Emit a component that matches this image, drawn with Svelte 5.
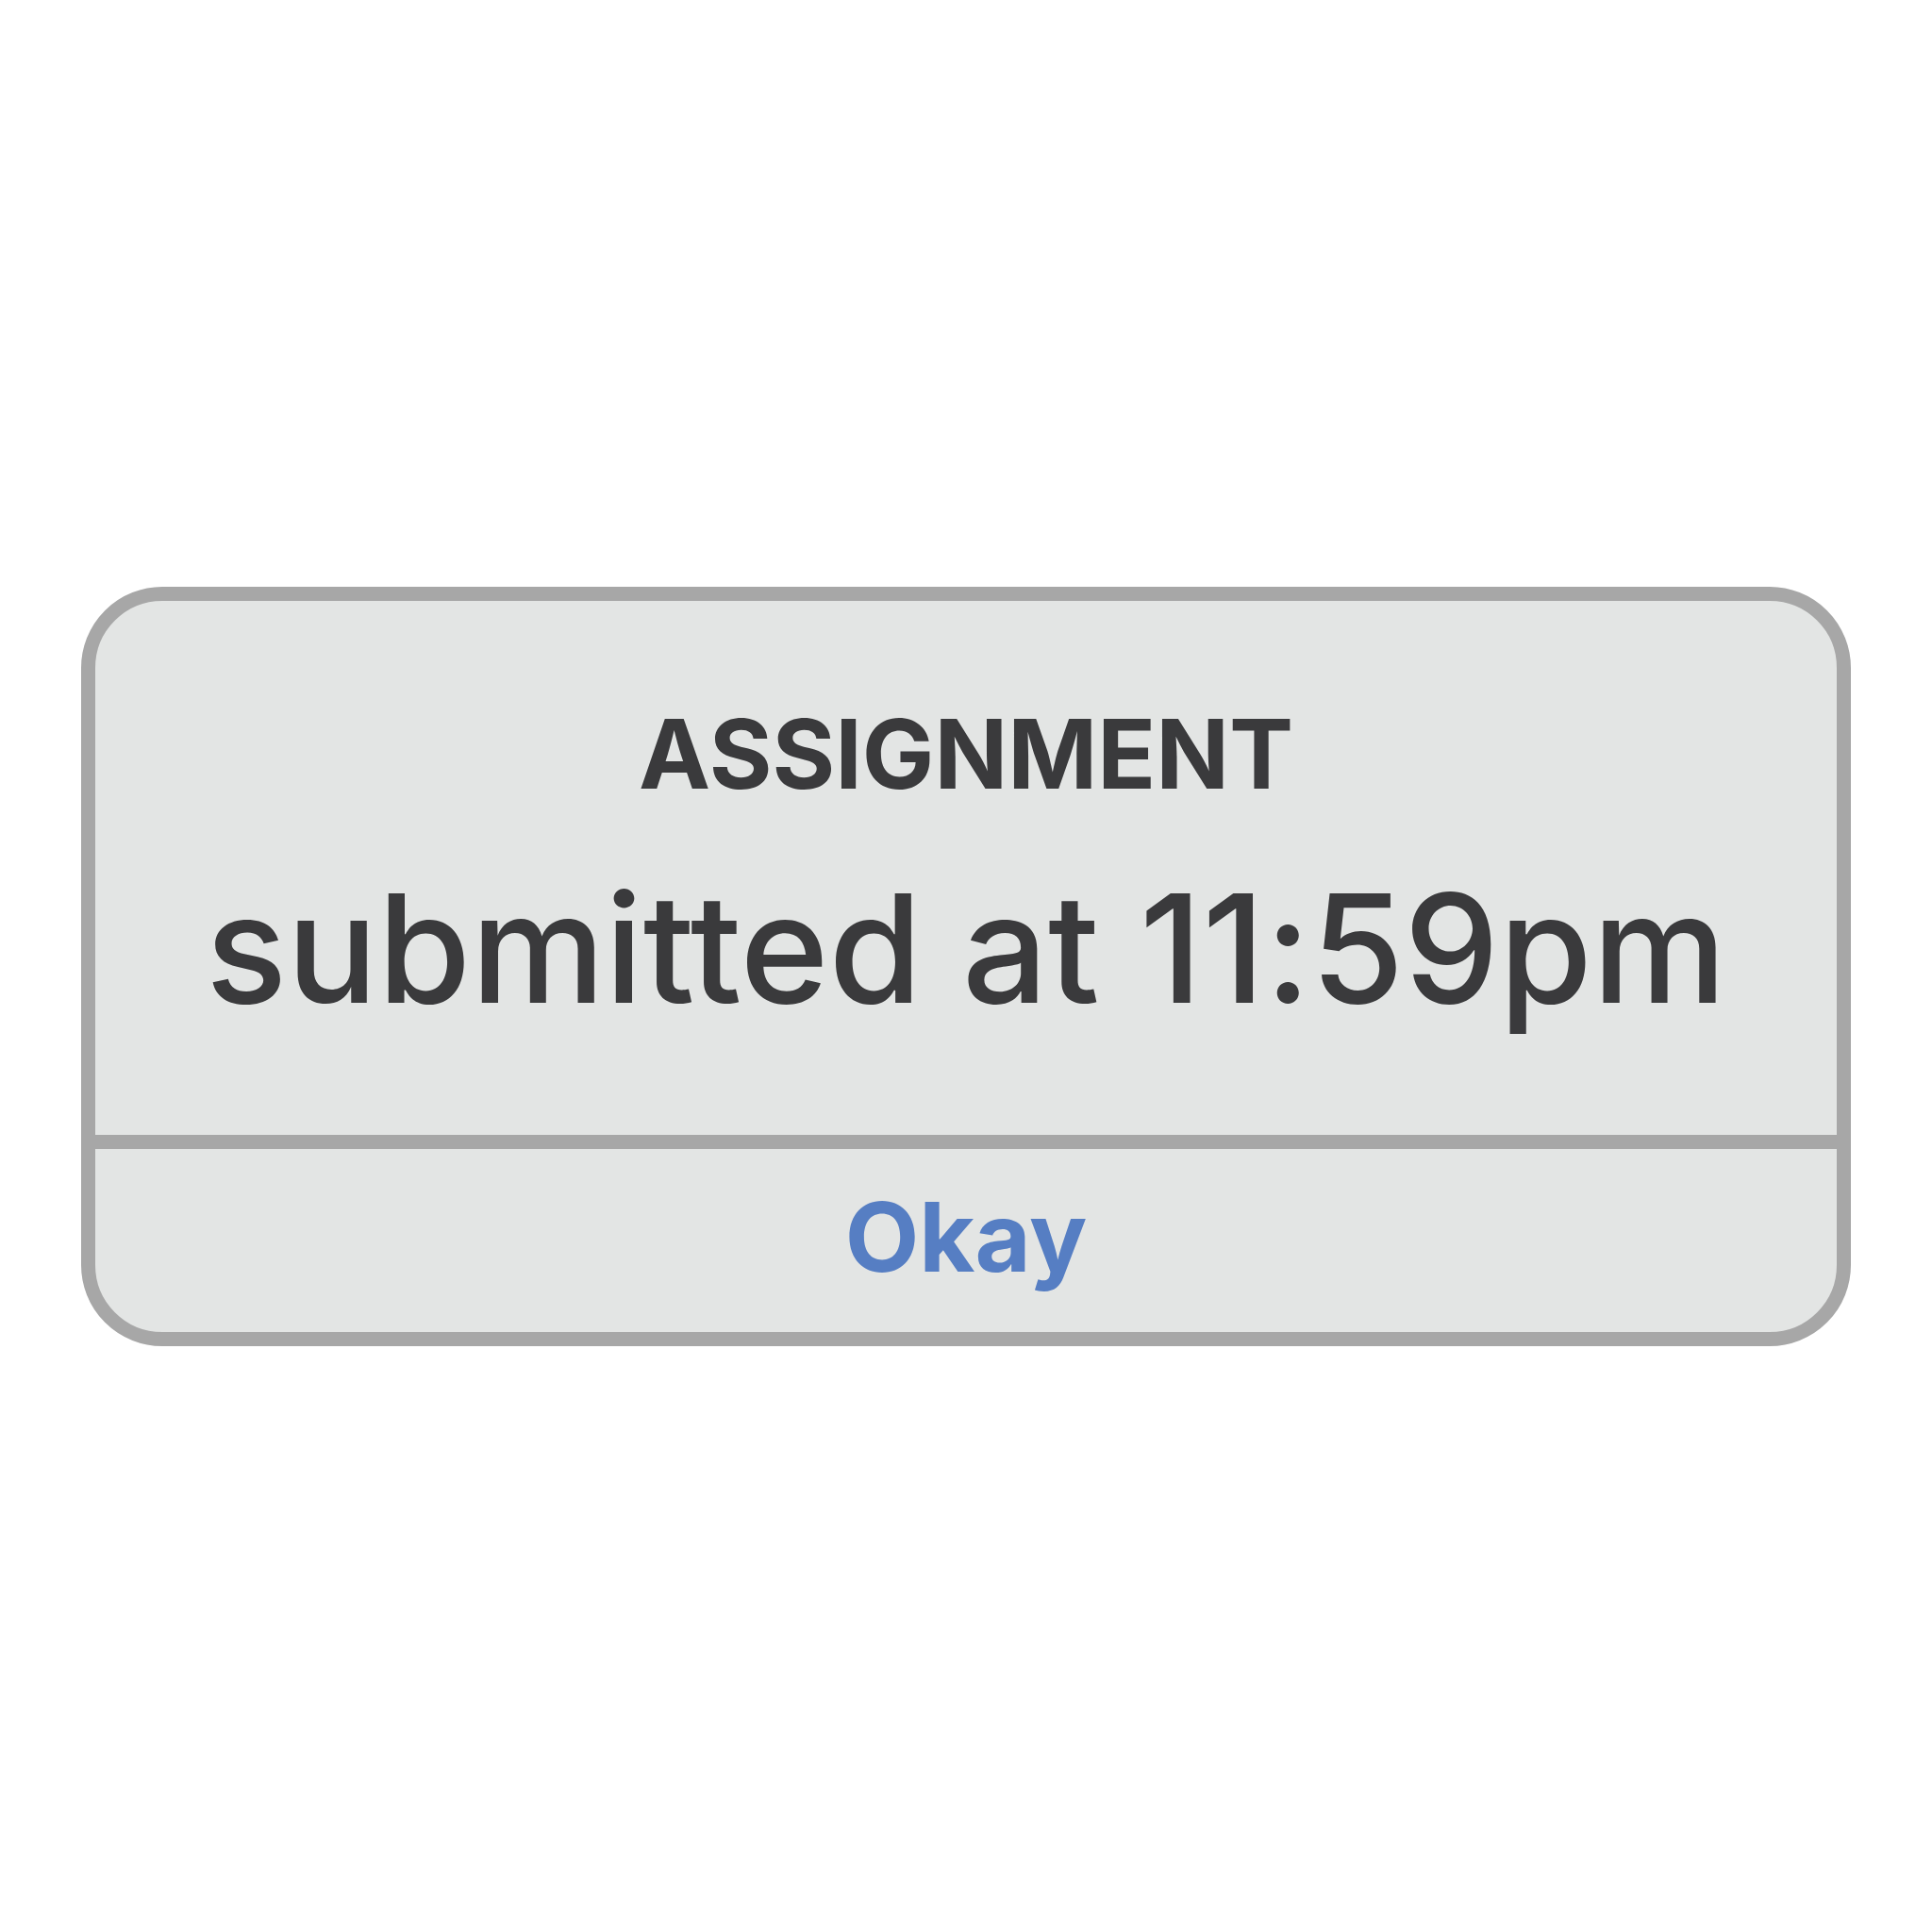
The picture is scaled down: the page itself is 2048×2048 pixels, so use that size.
<script>
  export let title = 'ASSIGNMENT';
  export let message = 'submitted at 11:59pm';
  export let confirmLabel = 'Okay';

  let open = true;

  function handleConfirm() {
    open = false;
  }
</script>

<main class="page">
  {#if open}
    <div class="alert" role="alertdialog" aria-labelledby="alert-title" aria-describedby="alert-message">
      <div class="alert-body">
        <h1 id="alert-title" class="alert-title">{title}</h1>
        <p id="alert-message" class="alert-message">{message}</p>
      </div>
      <button type="button" class="alert-button" on:click={handleConfirm}>{confirmLabel}</button>
    </div>
  {/if}
</main>

<style>
  :global(body) {
    margin: 0;
    background: #ffffff;
  }

  .page {
    box-sizing: border-box;
    min-height: 100vh;
    padding: 0 86px;
    display: flex;
    align-items: center;
    justify-content: center;
    font-family: Inter, sans-serif;
  }

  .alert {
    box-sizing: border-box;
    width: 100%;
    display: flex;
    flex-direction: column;
    overflow: hidden;
    border: 15px solid #a7a7a7;
    border-radius: 86px;
    background: #e3e5e4;
    color: #3a3a3c;
    text-align: center;
  }

  .alert-body {
    padding: 102px 40px 88px;
  }

  .alert-title {
    margin: 0;
    font-size: 102px;
    font-weight: 700;
    line-height: 120px;
  }

  .alert-message {
    margin: 36px 0 0;
    font-size: 160px;
    font-weight: 500;
    line-height: 220px;
    white-space: nowrap;
    /* keeps the colon on the baseline between digits */
    font-variant-ligatures: no-contextual;
  }

  .alert-button {
    padding: 28px 40px 36px;
    border: none;
    border-top: 15px solid #a7a7a7;
    background: none;
    color: #567ec3;
    font-family: inherit;
    font-size: 102px;
    font-weight: 700;
    line-height: 130px;
    cursor: pointer;
  }
</style>
